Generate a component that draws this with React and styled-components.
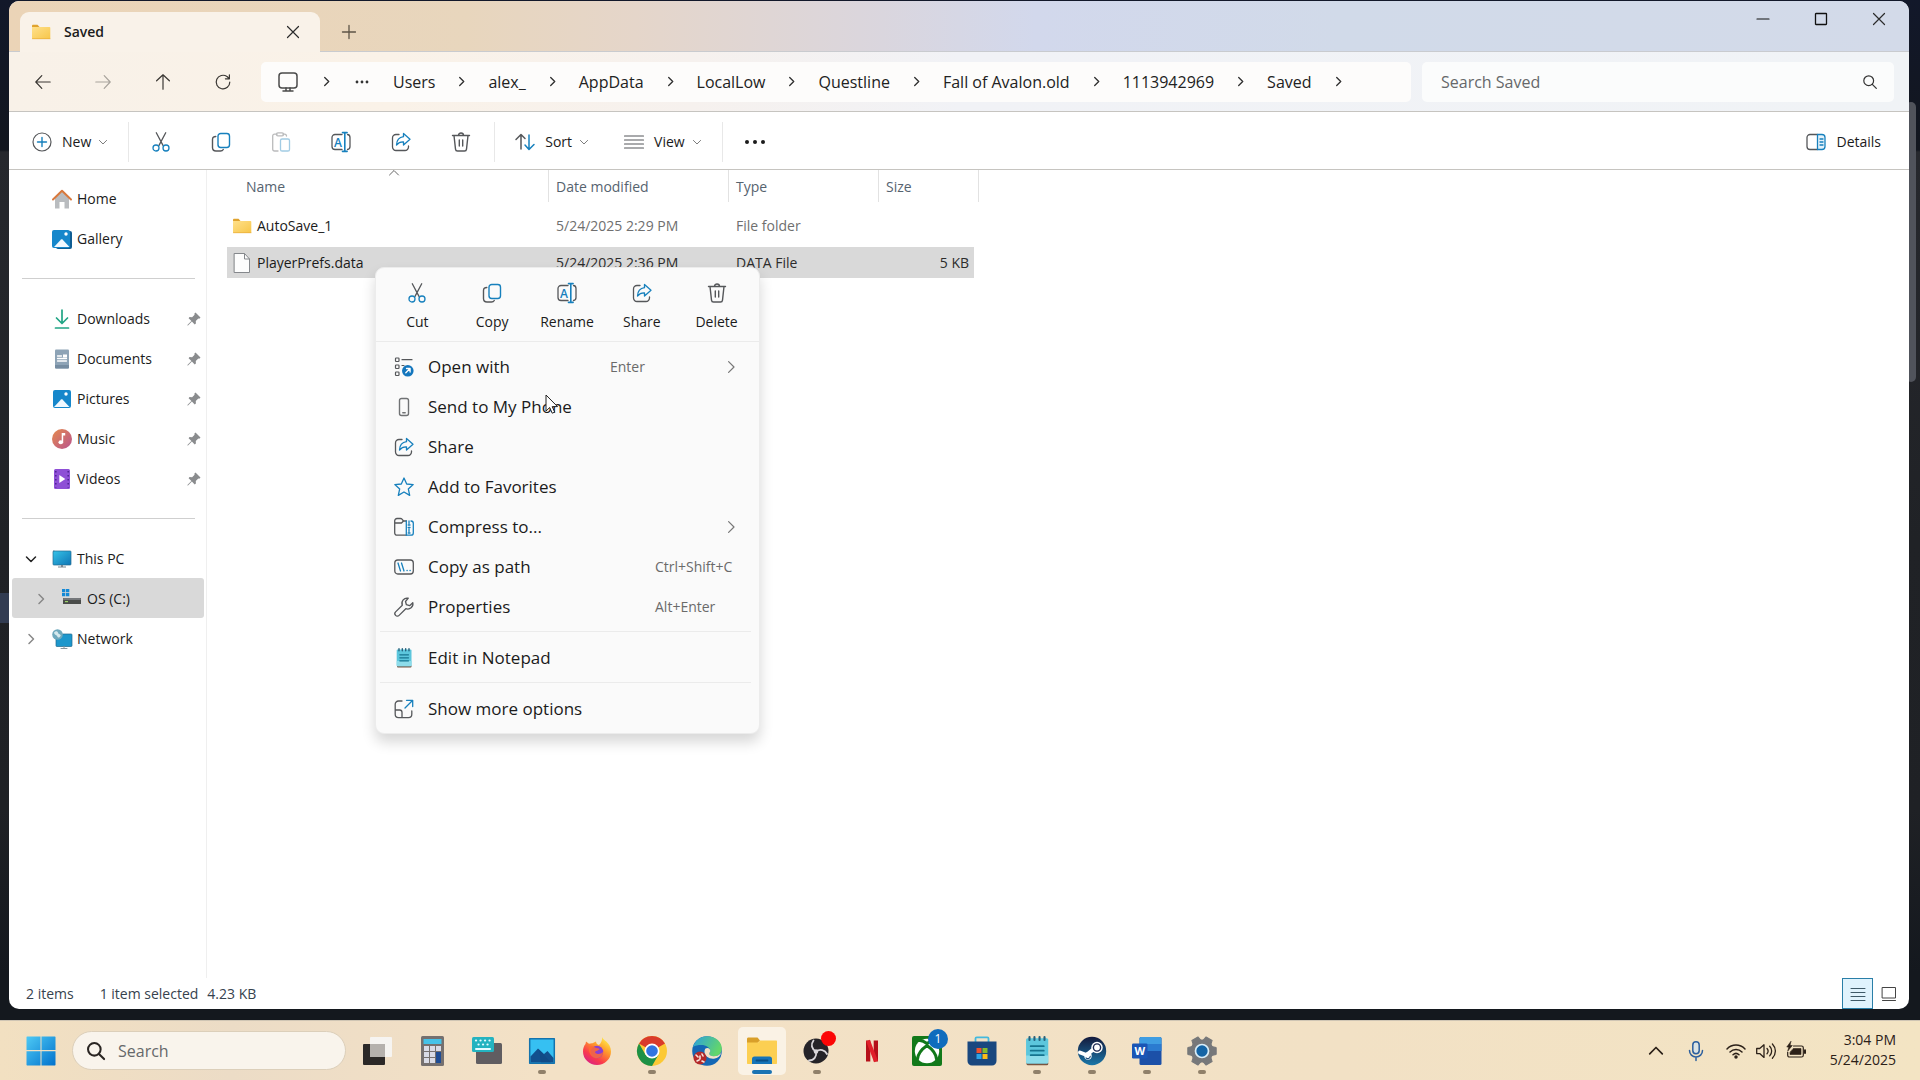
import { useState } from "react";
import styled, { createGlobalStyle } from "styled-components";

const GlobalStyle = createGlobalStyle`
  * {
    box-sizing: border-box;
  }
  body {
    margin: 0;
    font-family: "Open Sans", "Noto Sans", sans-serif;
    font-size: 14px;
    line-height: 20px;
    color: #1b1b1b;
    overflow: hidden;
  }
  button {
    font: inherit;
    color: inherit;
    background: none;
    border: none;
    padding: 0;
    cursor: default;
  }
  a {
    color: inherit;
    text-decoration: none;
    cursor: default;
  }
  svg {
    display: block;
    flex: none;
    overflow: visible;
  }
`;

const Desktop = styled.div`
  position: relative;
  display: flex;
  flex-direction: column;
  height: 100vh;
  background: linear-gradient(#12182a 0, #12161e 150px, #26282d 152px, #202226 50%, #1f2125 75%, #14181e 90%);
`;

const BehindScroll = styled.div`
  position: absolute;
  right: 4px;
  top: 102px;
  width: 10px;
  height: 280px;
  border-radius: 5px;
  background: #50535b;
`;

const BehindRow = styled.div`
  position: absolute;
  left: 0;
  top: 593px;
  width: 20px;
  height: 30px;
  background: #323c52;
`;

const Window = styled.main`
  position: relative;
  flex: 1;
  min-height: 0;
  display: flex;
  flex-direction: column;
  margin: 1px 11px 11px 9px;
  border-radius: 10px;
  background: #fff;
  overflow: hidden;
`;

const TitleBar = styled.header`
  display: flex;
  height: 51px;
  padding: 11px 0 0 11px;
  border-bottom: 1px solid #c9cbcf;
  background: linear-gradient(
    90deg,
    #ebd4b7 0%,
    #e8d6bd 24%,
    #e5d6ca 33%,
    #dad6de 46%,
    #d2d8ec 54%,
    #d1dae9 70%,
    #d3dae9 100%
  );
`;

const Tab = styled.div`
  display: flex;
  align-items: center;
  width: 300px;
  height: 40px;
  padding: 0 9px 0 11px;
  gap: 13px;
  border-radius: 9px 9px 0 0;
  background: #f9f2e9;
  font-weight: 600;
  font-size: 14px;
`;

const TabTitle = styled.span`
  flex: 1;
`;

const SmallButton = styled.button`
  display: grid;
  place-items: center;
  width: 36px;
  height: 32px;
`;

const NewTab = styled(SmallButton)`
  width: 58px;
  height: 40px;
`;

const WindowControls = styled.div`
  display: flex;
  margin: -11px 1px 0 auto;
`;

const ControlButton = styled.button`
  display: grid;
  place-items: center;
  width: 58px;
  height: 36px;
`;

const NavBar = styled.div`
  display: flex;
  align-items: center;
  height: 60px;
  padding: 0 15px 0 4px;
  border-bottom: 1px solid #c6c4c0;
  background: linear-gradient(90deg, #f8f1e8 0%, #faf2e8 20%, #f6f1ee 36%, #f1f2f6 50%, #f0f3f6 100%);
`;

const NavButton = styled.button`
  display: grid;
  place-items: center;
  width: 60px;
  height: 40px;
  color: ${(p) => (p.disabled ? "#a8a39c" : "#3a3733")};
`;

const Address = styled.div`
  flex: 1;
  display: flex;
  align-items: center;
  gap: 22px;
  height: 40px;
  margin-left: 8px;
  padding-left: 15px;
  border-radius: 5px;
  background: #fdfcfb;
  font-size: 16px;
  white-space: nowrap;
  color: #222;
`;

const SearchBox = styled.label`
  flex: 0 1 472px;
  display: flex;
  align-items: center;
  height: 40px;
  margin-left: 11px;
  padding: 0 17px 0 19px;
  border-radius: 5px;
  background: #fbfcfc;
`;

const SearchInput = styled.input`
  flex: 1;
  min-width: 0;
  border: none;
  outline: none;
  padding: 0;
  background: transparent;
  font: inherit;
  font-size: 16px;
  color: #222;
  &::placeholder {
    color: #66686a;
    opacity: 1;
  }
`;

const Toolbar = styled.div`
  display: flex;
  align-items: center;
  height: 58px;
  padding: 2px 2px 0 5px;
  border-bottom: 1px solid #c6c4c0;
`;

const ToolButton = styled.button`
  display: flex;
  align-items: center;
  height: 40px;
  padding: 0 18px;
  margin-left: ${(p) => (p.$last ? "auto" : "0")};
`;

const ToolLabel = styled.span`
  margin: 0 8px 0 10px;
`;

const IconButton = styled.button`
  display: grid;
  place-items: center;
  width: 60px;
  height: 40px;
  opacity: ${(p) => (p.disabled ? 0.4 : 1)};
`;

const Separator = styled.span`
  width: 1px;
  height: 40px;
  margin: 0 2px 0 3px;
  background: #e8e8e8;
`;

const Body = styled.div`
  flex: 1;
  min-height: 0;
  display: flex;
`;

const Sidebar = styled.nav`
  width: 198px;
  padding: 8px 2px 0 3px;
  border-right: 1px solid #efefef;
`;

const SideItem = styled.a`
  display: flex;
  align-items: center;
  height: 40px;
  padding: 1px 3px 0 ${(p) => (p.$nested ? 23 : 13)}px;
  border-radius: 3px;
  background: ${(p) => (p.$selected ? "#d9d9d9" : "transparent")};
`;

const ChevronSlot = styled.span`
  display: grid;
  place-items: center;
  width: 12px;
  margin-right: 15px;
`;

const SideLabel = styled.span`
  flex: 1;
  margin-left: 5px;
`;

const SideRule = styled.hr`
  height: 1px;
  margin: 20px 9px 19px 10px;
  border: none;
  background: #cfcfcf;
`;

const FilePane = styled.section`
  flex: 1;
  padding-left: 20px;
`;

const FileTable = styled.table`
  width: 752px;
  table-layout: fixed;
  border-collapse: separate;
  border-spacing: 0;
`;

const HeadCell = styled.th`
  position: relative;
  width: ${(p) => p.$w}px;
  height: 37px;
  padding: 0;
  vertical-align: top;
  text-align: left;
  font-weight: 400;
  color: #56636f;
`;

const HeadLabel = styled.div`
  height: 32px;
  padding: 7px 0 0 ${(p) => (p.$first ? 19 : 7)}px;
  border-right: 1px solid #e2e2e2;
`;

const SortMark = styled.span`
  position: absolute;
  top: -2px;
  left: 162px;
`;

const Row = styled.tr`
  color: ${(p) => (p.$selected ? "#2c2c2c" : "#6f6f6f")};
  --row: ${(p) => (p.$selected ? "#d9d9d9" : "transparent")};
`;

const Cell = styled.td`
  height: 37px;
  padding: 1px 0 0 ${(p) => (p.$name ? 5 : 7)}px;
  border: solid transparent;
  border-width: 3px 0;
  background: var(--row);
  background-clip: padding-box;
`;

const SizeCell = styled(Cell)`
  padding: 1px 5px 0 0;
  border-right-width: 5px;
  text-align: right;
`;

const FileName = styled.span`
  display: flex;
  align-items: center;
  gap: 5px;
  color: #1b1b1b;
`;

const StatusBar = styled.footer`
  display: flex;
  align-items: flex-start;
  height: 31px;
  padding: 0 5px 0 17px;
  color: #36424e;
  line-height: 32px;
`;

const StatusText = styled.span`
  margin-right: ${(p) => p.$gap}px;
`;

const ViewButtons = styled.div`
  display: flex;
  margin-left: auto;
`;

const ViewButton = styled.button`
  display: grid;
  place-items: center;
  width: 31px;
  height: 31px;
  border: 1px solid ${(p) => (p.$on ? "#2a7fa8" : "transparent")};
  background: ${(p) => (p.$on ? "#e0f3fd" : "transparent")};
`;

const Menu = styled.div`
  position: absolute;
  left: 366px;
  top: 266px;
  width: 385px;
  border: 1px solid #ececec;
  border-radius: 9px;
  background: #fafafa;
  box-shadow: 0 8px 14px rgba(0, 0, 0, 0.16);
`;

const MenuTop = styled.div`
  display: flex;
  height: 74px;
  padding: 0 5px 0 4px;
  border-bottom: 1px solid #ebebeb;
`;

const TopAction = styled.button`
  flex: 1;
  display: flex;
  flex-direction: column;
  align-items: center;
  gap: 9px;
  padding-top: 15px;
`;

const MenuGroup = styled.div`
  padding: 5px 0 4px;
  & + & {
    margin: 0 8px 0 4px;
    border-top: 1px solid #ebebeb;
    padding: 6px 0 4px;
  }
`;

const MenuItem = styled.button`
  display: grid;
  grid-template-columns: 20px 196px 45px 1fr 10px;
  align-items: center;
  width: 100%;
  height: 40px;
  padding: 0 24px 0 ${(p) => (p.$sub ? 14 : 18)}px;
  text-align: left;
`;

const MenuLabel = styled.span`
  padding-left: 14px;
  font-size: 17px;
  line-height: 24px;
  white-space: nowrap;
`;

const Shortcut = styled.span`
  grid-column: ${(p) => (p.$wide ? 4 : 3)};
  color: #6a6a6a;
  white-space: nowrap;
`;

const MenuArrow = styled.span`
  grid-column: 5;
`;

const Cursor = styled.svg`
  position: absolute;
  left: 536px;
  top: 393px;
  pointer-events: none;
`;

const Taskbar = styled.footer`
  display: flex;
  align-items: center;
  height: 60px;
  padding: 0 24px 0 17px;
  gap: 7px;
  background: linear-gradient(90deg, #f2e0c1, #ecdcc6 12%, #f3e1c6 28%, #f2e1c5 70%, #f3e4c3);
  border-top: 1px solid #cfc5b4;
`;

const TaskButton = styled.button`
  position: relative;
  display: grid;
  place-items: center;
  width: 48px;
  height: 48px;
  border-radius: 5px;
  background: ${(p) => (p.$active ? "#faf2e5" : "transparent")};
  &::after {
    content: "";
    display: ${(p) => (p.$open || p.$active ? "block" : "none")};
    position: absolute;
    bottom: 1px;
    left: 50%;
    width: ${(p) => (p.$active ? 20 : 8)}px;
    height: 4px;
    margin-left: ${(p) => (p.$active ? -10 : -4)}px;
    border-radius: 2px;
    background: ${(p) => (p.$active ? "#1a73b3" : "#90806a")};
  }
`;

const TaskSearch = styled.label`
  display: flex;
  align-items: center;
  flex: 0 1 274px;
  height: 39px;
  padding: 0 16px 0 14px;
  gap: 13px;
  border: 1px solid #dccfba;
  border-radius: 20px;
  background: #f9f4ec;
`;

const Badge = styled.span`
  position: absolute;
  top: ${(p) => (p.$plain ? 4 : 2)}px;
  left: ${(p) => (p.$plain ? 28 : 25)}px;
  width: ${(p) => (p.$plain ? 15 : 20)}px;
  height: ${(p) => (p.$plain ? 15 : 20)}px;
  border-radius: 50%;
  background: ${(p) => (p.$plain ? "#fb0505" : "#0f6cbd")};
  color: #fff;
  font-size: 12px;
`;

const Tray = styled.div`
  display: flex;
  align-items: center;
  margin-left: auto;
`;

const TrayButton = styled.button`
  display: flex;
  align-items: center;
  justify-content: center;
  gap: 10px;
  min-width: 40px;
  height: 48px;
  padding: 0 10px;
`;

const Clock = styled.button`
  padding: 0 0 2px 14px;
  text-align: right;
  color: #2b2018;
`;

const BLUE = "#1780bd";
const GREY = "#55575a";

const Svg = ({ size = 20, w, h, box = "0 0 20 20", children, ...rest }) => (
  <svg
    width={w || size}
    height={h || size}
    viewBox={box}
    fill="none"
    strokeLinecap="round"
    strokeLinejoin="round"
    aria-hidden="true"
    {...rest}
  >
    {children}
  </svg>
);

const Chevron = ({ dir = "right", size = 8, color = "#444", weight = 1.5 }) => {
  const turn = { right: 0, down: 90, left: 180, up: 270 }[dir];
  return (
    <Svg size={size} box="0 0 10 10" stroke={color} strokeWidth={weight}>
      <path d="M3 0.5 7.5 5 3 9.5" transform={`rotate(${turn} 5 5)`} />
    </Svg>
  );
};

const Cross = ({ size = 12 }) => (
  <Svg size={size} box="0 0 12 12" stroke="#2b2b2b" strokeWidth="1.2">
    <path d="M.5.5l11 11M11.5.5l-11 11" />
  </Svg>
);

const CutIcon = () => (
  <Svg strokeWidth="1.3">
    <path d="M5.3.8 12 13.4M14.7.8 8 13.4" stroke={GREY} />
    <circle cx="5" cy="16" r="3" stroke={BLUE} />
    <circle cx="15" cy="16" r="3" stroke={BLUE} />
  </Svg>
);

const CopyIcon = () => (
  <Svg strokeWidth="1.4">
    <path d="M4.8 4.5C2.5 4.5 1.5 5.5 1.5 7.5v8c0 2.2 1.3 3.5 3.5 3.5h4.5c1.3 0 2.2-.5 2.8-1.5" stroke={GREY} />
    <rect x="7" y="1.5" width="11.5" height="14" rx="2.7" stroke={BLUE} />
  </Svg>
);

const PasteIcon = () => (
  <Svg strokeWidth="1.3">
    <path d="M7 19H3.5A1.8 1.8 0 0 1 1.7 17.2V4a1.8 1.8 0 0 1 1.8-1.8H6M12 2.2h1.7A1.8 1.8 0 0 1 15.5 4" stroke={GREY} />
    <rect x="5.5" y=".8" width="7" height="3" rx="1.4" stroke={GREY} />
    <rect x="9.5" y="7" width="9" height="12" rx="1.6" stroke={BLUE} />
  </Svg>
);

const RenameIcon = () => (
  <Svg strokeWidth="1.3">
    <path d="M11 2.5H4A3 3 0 0 0 1 5.5v9a3 3 0 0 0 3 3h7M16.5 2.5c1.7.2 2.5 1.3 2.5 3v9c0 1.7-.8 2.8-2.5 3" stroke={GREY} />
    <path d="M13.8 1v18M11.5.6h4.6M11.5 19.4h4.6" stroke={BLUE} strokeWidth="1.6" />
    <text x="3" y="14.5" fontSize="12" fontFamily="Open Sans, sans-serif" fontWeight="600" fill={BLUE}>
      A
    </text>
  </Svg>
);

const ShareIcon = () => (
  <Svg strokeWidth="1.3">
    <path d="M8 2.5H5A3.5 3.5 0 0 0 1.5 6v9A3.5 3.5 0 0 0 5 18.5h9a3.5 3.5 0 0 0 3.5-3.5v-1" stroke={GREY} />
    <path d="M12.5 1.5 19 7.3l-6.5 5.700V9.8C9.5 9.6 7.2 10.8 5.5 13c.2-4.500 2.8-7.800 7-8.300z" stroke={BLUE} />
  </Svg>
);

const TrashIcon = () => (
  <Svg stroke={GREY} strokeWidth="1.4">
    <path d="M1.5 3.500h17M3 3.500l1.500 13.600c.1 1.100.9 1.900 2 1.900h7c1.100 0 1.900-.8 2-1.900L17 3.500M7.500 3.300c0-3 5-3 5 0M8.300 8v6M11.700 8v6" />
  </Svg>
);

const DetailsIcon = () => (
  <Svg strokeWidth="1.3">
    <path d="M11.500 2.500H4A3 3 0 0 0 1 5.500v9a3 3 0 0 0 3 3h7.500" stroke={GREY} />
    <path d="M11.500 2.500H16a3 3 0 0 1 3 3v9a3 3 0 0 1-3 3h-4.500z" stroke={BLUE} fill="#e3f2fb" />
    <path d="M14 7h3M14 10h3M14 13h3" stroke={BLUE} />
  </Svg>
);

const FolderIcon = ({ size = 20 }) => (
  <Svg size={size}>
    <defs>
      <linearGradient id="folder" x1="0" y1="0" x2="1" y2="1">
        <stop stopColor="#ffe08a" />
        <stop offset="1" stopColor="#f7c649" />
      </linearGradient>
    </defs>
    <path d="M1 4.200c0-.9.500-1.400 1.300-1.400h4.200L8.500 5H1z" fill="#e0a32e" />
    <path d="M1 5h17.500c.5 0 .8.300.8.800v10.400c0 .5-.3.800-.8.800H1.800c-.5 0-.8-.3-.8-.8z" fill="url(#folder)" />
    <path d="M1.500 16.700h17.500" stroke="#eab03c" strokeWidth=".8" />
  </Svg>
);

const PictureIcon = ({ stacked }) => (
  <Svg>
    {stacked && <rect x="4" y="2" width="16" height="18" rx="2" fill="#0f5d93" />}
    <rect x={stacked ? 0 : 1} y="1" width="18" height="18" rx="2" fill="#1687cb" />
    <path d="M2 18 9 10.500c.5-.5 1-.5 1.500 0L17.500 18z" fill="#f1f9ff" />
    <circle cx="14" cy="5" r="1.700" fill="#fff" />
  </Svg>
);

const HomeIcon = () => (
  <Svg>
    <path d="M3 8.500 10 2l7 6.500v11h-4.500v-6.500h-5v6.500H3z" fill="#b9bcbf" />
    <path d="M1 10.500 10 1.800l9 8.700" stroke="#d8793d" strokeWidth="2" />
  </Svg>
);

const DownloadIcon = () => (
  <Svg stroke="#21a585" strokeWidth="1.7">
    <path d="M10 1v13M4.500 9 10 14.500 15.500 9M3.500 19h13" />
  </Svg>
);

const DocumentIcon = () => (
  <Svg>
    <rect x="3" y="0.500" width="14" height="19" rx="1" fill="#8da3b6" />
    <path d="M3 16h14v2.500a1 1 0 0 1-1 1H4a1 1 0 0 1-1-1z" fill="#758ca1" />
    <path d="M5.500 7h4M5.500 9.500h9M5.500 12h9" stroke="#fff" strokeWidth="1.3" />
    <rect x="11" y="5.500" width="4" height="3" fill="#fff" />
  </Svg>
);

const MusicIcon = () => (
  <Svg>
    <defs>
      <linearGradient id="music" x1="0" y1="0" x2="1" y2="1">
        <stop stopColor="#e58a4d" />
        <stop offset="1" stopColor="#b9548f" />
      </linearGradient>
    </defs>
    <circle cx="10" cy="10" r="10" fill="url(#music)" />
    <ellipse cx="8.800" cy="13.200" rx="2.300" ry="2" fill="#fff" />
    <path d="M9.700 4h3.500v2.600h-2v6.600H9.700z" fill="#fff" />
  </Svg>
);

const VideoIcon = () => (
  <Svg>
    <rect x="2" y="0" width="16" height="20" rx="1.500" fill="#8e4fd6" />
    <path d="M3.800 2v16.500M16.200 2v16.500" stroke="#4b2291" strokeWidth="1.5" strokeDasharray="1.5 2.5" strokeLinecap="butt" />
    <path d="M7.300 6v8l6-4z" fill="#fff" />
  </Svg>
);

const PcIcon = () => (
  <Svg>
    <defs>
      <linearGradient id="pc" x1="0" y1="0" x2="1" y2="1">
        <stop stopColor="#35c3e8" />
        <stop offset="1" stopColor="#0f75b5" />
      </linearGradient>
    </defs>
    <rect x="1" y="2" width="18" height="14" rx=".8" fill="url(#pc)" stroke="#236b8f" strokeWidth=".7" />
    <path d="M9 16h2v1.500h3V18.500H6V17.500h3z" fill="#7b8790" />
  </Svg>
);

const DriveIcon = () => (
  <Svg>
    <path d="M0 0h3.300v3.300H0zM4 0h3.300v3.300H4zM0 4h3.300v3.300H0zM4 4h3.300v3.300H4z" fill="#1489d6" />
    <rect x="1" y="9" width="18" height="6" rx=".6" fill="#4a4c4a" />
    <path d="M1.500 9h17l.5 2H1z" fill="#74777a" />
    <rect x="3" y="12" width="3" height="1.200" fill="#9cd36a" />
  </Svg>
);

const NetworkIcon = () => (
  <Svg>
    <rect x="4" y="5" width="16" height="12.500" rx=".8" fill="#1d97cc" stroke="#20698c" strokeWidth=".7" />
    <path d="M12 17.500v1.500M9 19.500h6" stroke="#8a959c" strokeWidth="1" />
    <circle cx="5.500" cy="5.500" r="5.300" fill="#6fa9bd" />
    <path d="M2 3.500c2-2 3.500-1.500 4 .2s2.500 1 2.700 3c-1.700 2.700-3 2-3.700.3S2.500 6.300 2 3.500z" fill="#d5e8ec" />
  </Svg>
);

const PinIcon = () => (
  <Svg size={14} box="0 0 14 14">
    <path d="M8.500.5 13.500 5.500 12.300 6.700 11.300 6.400 8.800 8.900 8.900 11.600 7.700 12.400 4.900 9.500 1 13.500.4 13.400.6 12.800 4.400 9 1.600 6.300 2.500 5.100 5.100 5.200 7.600 2.700 7.300 1.700z" fill="#8a8c8e" />
  </Svg>
);

const FileIcon = () => (
  <Svg>
    <path d="M2.500.5h10L17.500 6v13.500h-15z" fill="#fdfdfd" stroke="#85888c" strokeWidth="1" />
    <path d="M12.500.8V6h5" stroke="#85888c" strokeWidth="1" />
  </Svg>
);

const OpenWithIcon = () => (
  <Svg>
    <g stroke={GREY} strokeWidth="1.2">
      <rect x="1.500" y="1" width="3.500" height="3.500" rx=".7" />
      <rect x="1.500" y="8" width="3.500" height="3.500" rx=".7" />
      <rect x="1.500" y="15" width="3.500" height="3.500" rx=".7" />
      <path d="M8 2.700h10M8 8.500h2" />
    </g>
    <circle cx="13.800" cy="13.800" r="5.800" fill="#1376bd" />
    <path d="M11.800 15.800l4-4M12.500 11.500h3.600v3.600" stroke="#fff" strokeWidth="1.3" />
  </Svg>
);

const PhoneIcon = () => (
  <Svg stroke="#707274" strokeWidth="1.4">
    <rect x="5.500" y="1.500" width="9" height="17" rx="2" />
    <path d="M8.800 15.800h2.400" />
  </Svg>
);

const StarIcon = () => (
  <Svg stroke={BLUE} strokeWidth="1.3">
    <path d="M10 1l2.700 6 6.500.6-4.900 4.300 1.400 6.500L10 15l-5.700 3.400 1.400-6.500L.8 7.600 7.300 7z" />
  </Svg>
);

const ZipIcon = () => (
  <Svg strokeWidth="1.3">
    <path d="M12.500 4H9.500L8 2.200C7.600 1.700 7.200 1.500 6.500 1.500H3a2.300 2.300 0 0 0-2.300 2.300v12A2.300 2.300 0 0 0 3 18.200h9.300M1 6h6.500l2-2" stroke={GREY} />
    <path d="M12.300 4v14.200H17a2.300 2.300 0 0 0 2.300-2.300V6.300A2.300 2.300 0 0 0 17 4M15 4v2.500M14.200 8h1.800M14.200 10.500h1.800M15 12v2.500M14.200 16h1.800" stroke={BLUE} />
  </Svg>
);

const PathIcon = () => (
  <Svg strokeWidth="1.3">
    <rect x=".8" y="3" width="18.500" height="14" rx="3" stroke={GREY} />
    <path d="M4 6l2.500 8M7.500 6 10 14M13 13.500h.2M16 13.500h.2" stroke={BLUE} />
  </Svg>
);

const WrenchIcon = () => (
  <Svg stroke={GREY} strokeWidth="1.3">
    <path d="M14.300 1.200a5.200 5.200 0 0 0-6 7L1.600 14.900a2.400 2.400 0 0 0 3.500 3.500l6.700-6.700a5.200 5.200 0 0 0 7-6l-3.200 3-3.200-1-.9-3.200z" />
  </Svg>
);

const NotepadIcon = ({ size = 20 }) => (
  <Svg size={size}>
    <rect x="3" y="17" width="14.500" height="2.500" rx="1" fill="#7a5540" />
    <rect x="2.700" y="1.500" width="14.800" height="16.800" rx="1" fill="#5cc6dc" />
    <path d="M2.700 13h14.800v4.300a1 1 0 0 1-1 1H3.700a1 1 0 0 1-1-1z" fill="#8ddcea" />
    <path d="M5 .7v2M8.300.7v2M11.700.7v2M15 .7v2" stroke="#26617c" strokeWidth="1.4" />
    <path d="M5.800 6.800h8.700M5.800 9.800h8.700M5.800 12.800h8.700" stroke="#16748f" strokeWidth="1.2" />
  </Svg>
);

const MoreIcon = () => (
  <Svg strokeWidth="1.3">
    <path d="M8 2H4.500A3.300 3.300 0 0 0 1.200 5.300v10A3.300 3.300 0 0 0 4.500 18.600h10a3.300 3.300 0 0 0 3.300-3.300V12M1.500 11h4.200A2.300 2.300 0 0 1 8 13.300v5" stroke={GREY} />
    <path d="M11 9l7.500-7.500M12.500 1.300h6.200v6.200" stroke={BLUE} />
  </Svg>
);

const SearchGlyph = ({ size = 14, weight = 1.2, color = "#333" }) => (
  <Svg size={size} box="0 0 14 14" stroke={color} strokeWidth={weight}>
    <circle cx="5.700" cy="5.700" r="4.900" />
    <path d="M9.300 9.300 13.300 13.300" />
  </Svg>
);

const StartIcon = () => (
  <Svg size={30} box="0 0 30 30">
    <defs>
      <linearGradient id="start" x1="0" y1="0" x2="30" y2="30" gradientUnits="userSpaceOnUse">
        <stop stopColor="#4fcbf5" />
        <stop offset="1" stopColor="#0070cc" />
      </linearGradient>
    </defs>
    <path d="M1 .5h13.500v13.500H.5V1zM15.500.5H29l.5.5v13H15.500zM.5 15.200h14v14.300H1l-.5-.5zM15.500 15.200h14V29l-.5.5H15.500z" fill="url(#start)" />
  </Svg>
);

const TaskViewIcon = () => (
  <Svg size={30} box="0 0 30 30">
    <rect x="1" y="8" width="22" height="21" rx="1" fill="#2b2827" />
    <rect x="8" y="1" width="22" height="20" rx="1" fill="#f6f5f4" opacity=".93" />
    <path d="M8 8h15v13H8z" fill="#b5b1ad" />
  </Svg>
);

const CalcIcon = () => (
  <Svg size={30} box="0 0 30 30">
    <rect x="4" y="0" width="23" height="30" rx="1.500" fill="#75706f" />
    <rect x="6.500" y="3" width="18" height="5" fill="#45c2e8" />
    <path d="M7 10h5v5H7zM13 10h5v5h-5zM19 10h5v5h-5zM7 16h5v5H7zM13 16h5v5h-5zM7 22h5v5H7zM13 22h5v5h-5z" fill="#d9dbe6" />
    <path d="M19 16h5v11h-5z" fill="#1f4c94" />
  </Svg>
);

const KeyboardIcon = () => (
  <Svg size={30} box="0 0 30 30">
    <rect x="4" y="7" width="26" height="21" rx="1.500" fill="#605d61" />
    <rect x="0" y="1" width="22" height="15" rx="1.500" fill="#24b3c0" />
    <path d="M4 4.500h.1M8.500 4.500h.1M13 4.500h.1M17.500 4.500h.1M6.500 8.500h.1M11 8.500h.1M15.500 8.500h.1" stroke="#e5fbff" strokeWidth="2.2" />
    <path d="M4 13h14" stroke="#e5fbff" strokeWidth="2" />
  </Svg>
);

const PhotosIcon = () => (
  <Svg size={30} box="0 0 30 30">
    <rect x="2.700" y="2.700" width="24.600" height="24.600" fill="#36c0f2" stroke="#1473ad" strokeWidth="1.5" />
    <path d="M3.500 20.500 11 12.500l6 5.500 3.500-3 6 7v4.500h-23z" fill="#12508e" />
    <path d="M12 13.500 24 26.500H14z" fill="#0f4580" opacity=".5" />
  </Svg>
);

const FirefoxIcon = () => (
  <Svg size={30} box="0 0 30 30">
    <defs>
      <linearGradient id="fox" x1=".85" y1=".05" x2=".2" y2="1">
        <stop stopColor="#fff04a" />
        <stop offset=".35" stopColor="#ff9a2b" />
        <stop offset=".7" stopColor="#fa3a4b" />
        <stop offset="1" stopColor="#d51f8c" />
      </linearGradient>
    </defs>
    <path d="M20 1c1 3 5 4 7.500 8.500 1 2 1.500 4 1.500 6a14 13.500 0 0 1-28 0c0-3 .8-5.500 2.500-7.500L4 5.500l3 2.300C8 7.200 10 7 10.500 7.200L14 5.500c0 1.500 1 3 3 3.500 2-2 3.500-4.500 3-8z" fill="url(#fox)" />
    <circle cx="15" cy="16" r="6.200" fill="#8a3fd0" />
    <path d="M7 11c3-1.500 5-.5 6 .5 2 1 4 .3 4.500 1.500-1 2-4 1.300-4.500 3.500 2.500 2.500 6 1.500 8-.5 0 4-4 7-8 6S6 16 7 11z" fill="#ff6a33" opacity=".85" />
  </Svg>
);

const ChromeIcon = () => (
  <Svg size={30} box="0 0 30 30">
    <circle cx="15" cy="15" r="15" fill="#fcc934" />
    <path d="M15 15 2 7.500A15 15 0 0 1 28 7.500z" fill="#d93a2b" />
    <path d="M2 7.500A15 15 0 0 0 15 30L21.500 18.700 15 22 8.500 18.700z" fill="#1e9146" />
    <circle cx="15" cy="15" r="7.500" fill="#fff" />
    <circle cx="15" cy="15" r="5.800" fill="#3174e0" />
  </Svg>
);

const EdgeIcon = () => (
  <Svg size={30} box="0 0 30 30">
    <defs>
      <linearGradient id="edge" x1="0" y1="0" x2="1" y2=".4">
        <stop stopColor="#2a9fe0" />
        <stop offset="1" stopColor="#63d66b" />
      </linearGradient>
    </defs>
    <circle cx="15" cy="15" r="14.800" fill="#1467b5" />
    <path d="M1 11C3 4 9 .2 15 .2c9 0 15 6 14.800 12.500 0 5-4 7.500-8 7.500-3 0-4.500-1.200-4.500-2.500 0-1 1-1.500 1-3C18 11.500 14 9 9.500 9 6 9 3 9.500 1 11z" fill="url(#edge)" />
    <path d="M13.500 12.500c2.500-1.500 5 .5 4.800 2.500 0 1.200-1 1.500-1 2.700 0 1.500 1.700 2.500 4.500 2.500 3 0 5.500-1 7.500-3.500-1 3-3.300 5.500-7.300 6-5 .5-9.500-2.700-9.500-6.700 0-1.500.3-2.700 1-3.500z" fill="#f3e1c6" />
    <circle cx="8" cy="22" r="6.500" fill="#b32a2a" />
    <path d="M4 19l2 2M10 18l1 2M5 25l2-1M10 25l2 1M8 20v3" stroke="#f6e5df" strokeWidth="1.6" />
  </Svg>
);

const ExplorerIcon = () => (
  <Svg size={30} box="0 0 30 30">
    <path d="M0 3c0-1 .5-1.500 1.500-1.500h9L13 4.500 10.500 7H0z" fill="#d99f29" />
    <path d="M0 6.500h11l2-2h16c.7 0 1 .4 1 1V27c0 .7-.3 1-1 1H1c-.7 0-1-.3-1-1z" fill="#fccf52" />
    <path d="M5 28v-5a2.500 2.500 0 0 1 2.500-2.500h15A2.500 2.500 0 0 1 25 23v5z" fill="#1674b8" />
    <path d="M9.500 24.500h11" stroke="#0b4f86" strokeWidth="1.8" />
  </Svg>
);

const ObsIcon = () => (
  <Svg size={30} box="0 0 30 30">
    <circle cx="14" cy="15" r="12.500" fill="#252328" />
    <g stroke="#d9d6da" strokeWidth="1.8">
      <path d="M14 15.500C9.500 13 8.500 8.500 11.500 4.500" />
      <path d="M14 15.500c4-3 9-1.500 11 2.500" />
      <path d="M14 15.500c1 5-2 9-7 9" />
    </g>
    <circle cx="14" cy="15.500" r="2.300" fill="#d9d6da" />
  </Svg>
);

const NetflixIcon = () => (
  <Svg size={30} box="0 0 30 30">
    <rect x="9" y="4.500" width="4.300" height="21" fill="#b5101a" />
    <rect x="16.700" y="4.500" width="4.300" height="21" fill="#b5101a" />
    <line x1="11" y1="4.500" x2="19" y2="25.500" stroke="#e0202a" strokeWidth="4" strokeLinecap="butt" />
  </Svg>
);

const XboxIcon = () => (
  <Svg size={30} box="0 0 30 30">
    <rect width="30" height="30" rx="2" fill="#12791a" />
    <circle cx="15" cy="15" r="12.200" fill="#fff" />
    <path d="M7 4.500c3-.5 6 1.500 8 3 2-1.500 5-3.500 8-3M15 9.500C10 13 6 18 5.500 23M15 9.500c5 3.500 9 8.500 9.500 13.500" stroke="#12791a" strokeWidth="3" />
  </Svg>
);

const StoreIcon = () => (
  <Svg size={30} box="0 0 30 30">
    <path d="M8.500 6V2.500c0-.8.400-1.200 1.200-1.200h10.600c.8 0 1.200.4 1.200 1.200V6" stroke="#43b9de" strokeWidth="1.8" />
    <path d="M.5 5.500h29V25a4.500 4.500 0 0 1-4.500 4.500H5A4.500 4.500 0 0 1 .5 25z" fill="#19477f" />
    <path d="M9.500 12h5v5h-5z" fill="#f0512d" />
    <path d="M15.500 12h5v5h-5z" fill="#84bb2c" />
    <path d="M9.500 18h5v5h-5z" fill="#2ba4e6" />
    <path d="M15.500 18h5v5h-5z" fill="#fbbb17" />
  </Svg>
);

const SteamIcon = () => (
  <Svg size={30} box="0 0 30 30">
    <defs>
      <linearGradient id="steam" x1="0" y1="0" x2="0" y2="1">
        <stop stopColor="#141a3c" />
        <stop offset="1" stopColor="#1a76a8" />
      </linearGradient>
    </defs>
    <circle cx="15" cy="15" r="14.200" fill="url(#steam)" />
    <path d="M3 16.500 9.500 19l5.500-4.500L19 12" stroke="#fff" strokeWidth="4" />
    <circle cx="20" cy="11.500" r="5.700" fill="#fff" />
    <circle cx="20" cy="11.500" r="3.600" fill="#fff" stroke="#1b2850" strokeWidth="1.4" />
    <circle cx="11" cy="20" r="3.700" fill="#fff" />
    <path d="M9 21.800a2.500 2.500 0 0 0 4.300-1.500" stroke="#1b4a78" strokeWidth="1.1" />
  </Svg>
);

const WordIcon = () => (
  <Svg size={30} box="0 0 30 30">
    <rect x="7.500" y="1" width="22" height="28" rx="1.500" fill="#1c50a8" />
    <path d="M9 1h19a1.500 1.500 0 0 1 1.500 1.500V8h-22V2.500A1.500 1.500 0 0 1 9 1z" fill="#3f9de2" />
    <path d="M7.500 8h22v7h-22z" fill="#2b7bd0" />
    <rect x="0" y="7.500" width="15.500" height="15" rx="1.300" fill="#1a55b5" />
    <text x="7.800" y="19" textAnchor="middle" fontSize="11" fontWeight="700" fontFamily="Open Sans, sans-serif" fill="#fff">
      W
    </text>
  </Svg>
);

const SettingsIcon = () => (
  <Svg size={30} box="0 0 30 30">
    <g fill="#77787a">
      <circle cx="15" cy="15" r="11.500" />
      {[30, 90, 150, 210, 270, 330].map((a) => (
        <path key={a} d="M10.500 5.500 11.500.8h7l1 4.700z" transform={`rotate(${a} 15 15)`} stroke="#77787a" />
      ))}
    </g>
    <circle cx="15" cy="15" r="6.500" fill="#1464a5" stroke="#d8edf8" strokeWidth="1.7" />
  </Svg>
);

const breadcrumbs = [
  "Users",
  "alex_",
  "AppData",
  "LocalLow",
  "Questline",
  "Fall of Avalon.old",
  "1113942969",
  "Saved",
];

const fileActions = [
  { name: "Cut", icon: <CutIcon /> },
  { name: "Copy", icon: <CopyIcon /> },
  { name: "Paste", icon: <PasteIcon />, disabled: true },
  { name: "Rename", icon: <RenameIcon /> },
  { name: "Share", icon: <ShareIcon /> },
  { name: "Delete", icon: <TrashIcon /> },
];

const sideGroups = [
  [
    { name: "Home", icon: <HomeIcon /> },
    { name: "Gallery", icon: <PictureIcon stacked /> },
  ],
  [
    { name: "Downloads", icon: <DownloadIcon />, pinned: true },
    { name: "Documents", icon: <DocumentIcon />, pinned: true },
    { name: "Pictures", icon: <PictureIcon />, pinned: true },
    { name: "Music", icon: <MusicIcon />, pinned: true },
    { name: "Videos", icon: <VideoIcon />, pinned: true },
  ],
  [
    { name: "This PC", icon: <PcIcon />, chevron: "down" },
    { name: "OS (C:)", icon: <DriveIcon />, chevron: "right", nested: true, selected: true },
    { name: "Network", icon: <NetworkIcon />, chevron: "right" },
  ],
];

const files = [
  { name: "AutoSave_1", date: "5/24/2025 2:29 PM", type: "File folder", size: "", icon: <FolderIcon /> },
  { name: "PlayerPrefs.data", date: "5/24/2025 2:36 PM", type: "DATA File", size: "5 KB", icon: <FileIcon /> },
];

const menuGroups = [
  [
    { name: "Open with", icon: <OpenWithIcon />, keys: "Enter", arrow: true },
    { name: "Send to My Phone", icon: <PhoneIcon /> },
    { name: "Share", icon: <ShareIcon /> },
    { name: "Add to Favorites", icon: <StarIcon /> },
    { name: "Compress to...", icon: <ZipIcon />, arrow: true },
    { name: "Copy as path", icon: <PathIcon />, keys: "Ctrl+Shift+C", wide: true },
    { name: "Properties", icon: <WrenchIcon />, keys: "Alt+Enter", wide: true },
  ],
  [{ name: "Edit in Notepad", icon: <NotepadIcon /> }],
  [{ name: "Show more options", icon: <MoreIcon /> }],
];

const apps = [
  { name: "Task view", icon: <TaskViewIcon /> },
  { name: "Calculator", icon: <CalcIcon /> },
  { name: "On-screen keyboard", icon: <KeyboardIcon /> },
  { name: "Photos", icon: <PhotosIcon />, open: true },
  { name: "Firefox", icon: <FirefoxIcon /> },
  { name: "Chrome", icon: <ChromeIcon />, open: true },
  { name: "Edge", icon: <EdgeIcon /> },
  { name: "File Explorer", icon: <ExplorerIcon />, active: true },
  { name: "OBS", icon: <ObsIcon />, open: true, dot: true },
  { name: "Netflix", icon: <NetflixIcon /> },
  { name: "Xbox", icon: <XboxIcon />, badge: "1" },
  { name: "Store", icon: <StoreIcon /> },
  { name: "Notepad", icon: <NotepadIcon size={30} />, open: true },
  { name: "Steam", icon: <SteamIcon />, open: true },
  { name: "Word", icon: <WordIcon />, open: true },
  { name: "Settings", icon: <SettingsIcon />, open: true },
];

const ContextMenu = () => (
  <Menu>
    <MenuTop>
      {fileActions
        .filter((a) => !a.disabled)
        .map((a) => (
          <TopAction key={a.name}>
            {a.icon}
            {a.name}
          </TopAction>
        ))}
    </MenuTop>
    {menuGroups.map((group, i) => (
      <MenuGroup key={i}>
        {group.map((item) => (
          <MenuItem key={item.name} $sub={i > 0}>
            {item.icon}
            <MenuLabel>{item.name}</MenuLabel>
            {item.keys && <Shortcut $wide={item.wide}>{item.keys}</Shortcut>}
            {item.arrow && (
              <MenuArrow>
                <Chevron size={12} color="#777" weight={1} />
              </MenuArrow>
            )}
          </MenuItem>
        ))}
      </MenuGroup>
    ))}
  </Menu>
);

const SideBar = () => (
  <Sidebar>
    {sideGroups.map((group, i) => (
      <div key={i}>
        {i > 0 && <SideRule />}
        {group.map((item) => (
          <SideItem key={item.name} href="#" $nested={item.nested} $selected={item.selected}>
            <ChevronSlot>
              {item.chevron && (
                <Chevron
                  dir={item.chevron}
                  size={10}
                  color={item.chevron === "down" ? "#222" : "#888"}
                />
              )}
            </ChevronSlot>
            {item.icon}
            <SideLabel>{item.name}</SideLabel>
            {item.pinned && <PinIcon />}
          </SideItem>
        ))}
      </div>
    ))}
  </Sidebar>
);

const App = () => {
  const [query, setQuery] = useState("");
  const [taskQuery, setTaskQuery] = useState("");

  return (
    <>
      <GlobalStyle />
      <Desktop>
        <BehindScroll />
        <BehindRow />
        <Window>
          <TitleBar>
            <Tab>
              <FolderIcon />
              <TabTitle>Saved</TabTitle>
              <SmallButton aria-label="Close tab">
                <Cross />
              </SmallButton>
            </Tab>
            <NewTab aria-label="New tab">
              <Svg size={14} box="0 0 14 14" stroke="#5d5447" strokeWidth="1.3">
                <path d="M7 .5v13M.5 7h13" />
              </Svg>
            </NewTab>
            <WindowControls>
              <ControlButton aria-label="Minimize">
                <Svg size={12} box="0 0 12 12" stroke="#111" strokeWidth="1.2">
                  <path d="M0 6h12" />
                </Svg>
              </ControlButton>
              <ControlButton aria-label="Maximize">
                <Svg size={12} box="0 0 12 12" stroke="#111" strokeWidth="1.3">
                  <rect x=".5" y=".5" width="11" height="11" rx=".5" />
                </Svg>
              </ControlButton>
              <ControlButton aria-label="Close">
                <Cross />
              </ControlButton>
            </WindowControls>
          </TitleBar>

          <NavBar>
            <NavButton aria-label="Back">
              <Svg size={16} stroke="currentColor" strokeWidth="1.5">
                <path d="M19 10H1M8.500 2 1 10l7.500 8" />
              </Svg>
            </NavButton>
            <NavButton aria-label="Forward" disabled>
              <Svg size={16} stroke="currentColor" strokeWidth="1.5">
                <path d="M1 10h18M11.500 2l7.500 8-7.500 8" />
              </Svg>
            </NavButton>
            <NavButton aria-label="Up">
              <Svg size={16} stroke="currentColor" strokeWidth="1.5">
                <path d="M10 19V1M2 8.500 10 1l8 7.500" />
              </Svg>
            </NavButton>
            <NavButton aria-label="Refresh">
              <Svg size={16} stroke="currentColor" strokeWidth="1.5">
                <path d="M18.500 10A8.500 8.500 0 1 1 15 3.200L18 6M18 1v5h-5" />
              </Svg>
            </NavButton>
            <Address>
              <Svg size={24} box="0 0 24 24" stroke="#4a4a4a" strokeWidth="1.5">
                <rect x="3" y="3" width="18" height="15" rx="3" />
                <path d="M10 18v3M14 18v3M7 21h10" />
              </Svg>
              <Chevron size={9} color="#333" />
              <Svg w={18} h={4} box="0 0 18 4" fill="#333">
                <circle cx="4" cy="2" r="1.400" />
                <circle cx="9" cy="2" r="1.400" />
                <circle cx="14" cy="2" r="1.400" />
              </Svg>
              {breadcrumbs.map((crumb) => [
                <a key={crumb} href="#">
                  {crumb}
                </a>,
                <Chevron key={crumb + "-next"} size={9} color="#333" />,
              ])}
            </Address>
            <SearchBox>
              <SearchInput
                placeholder="Search Saved"
                aria-label="Search Saved"
                value={query}
                onChange={(e) => setQuery(e.target.value)}
              />
              <SearchGlyph />
            </SearchBox>
          </NavBar>

          <Toolbar>
            <ToolButton>
              <Svg strokeWidth="1.2">
                <circle cx="10" cy="10" r="9" stroke={GREY} />
                <path d="M10 5.500v9M5.500 10h9" stroke={BLUE} strokeWidth="1.4" />
              </Svg>
              <ToolLabel>New</ToolLabel>
              <Chevron dir="down" color="#777" weight={1.2} />
            </ToolButton>
            <Separator />
            {fileActions.map((a) => (
              <IconButton key={a.name} aria-label={a.name} disabled={a.disabled}>
                {a.icon}
              </IconButton>
            ))}
            <Separator />
            <ToolButton>
              <Svg strokeWidth="1.5">
                <path d="M6 17V3M1 7.500 6 2.500l4 4" stroke={GREY} />
                <path d="M14 3v14M10 13l4 4.500 5-5" stroke={BLUE} />
              </Svg>
              <ToolLabel>Sort</ToolLabel>
              <Chevron dir="down" color="#777" weight={1.2} />
            </ToolButton>
            <ToolButton>
              <Svg stroke={GREY} strokeWidth="1.2">
                <path d="M.5 4h19M.5 8h19M.5 12h19M.5 16h19" />
              </Svg>
              <ToolLabel>View</ToolLabel>
              <Chevron dir="down" color="#777" weight={1.2} />
            </ToolButton>
            <Separator />
            <IconButton aria-label="See more">
              <Svg fill="#1b1b1b">
                <circle cx="2" cy="10" r="2" />
                <circle cx="10" cy="10" r="2" />
                <circle cx="18" cy="10" r="2" />
              </Svg>
            </IconButton>
            <ToolButton $last>
              <DetailsIcon />
              <ToolLabel>Details</ToolLabel>
            </ToolButton>
          </Toolbar>

          <Body>
            <SideBar />
            <FilePane>
              <FileTable>
                <thead>
                  <tr>
                    <HeadCell $w={322}>
                      <HeadLabel $first>Name</HeadLabel>
                      <SortMark>
                        <Chevron dir="up" size={10} color="#666" weight={1} />
                      </SortMark>
                    </HeadCell>
                    <HeadCell $w={180}>
                      <HeadLabel>Date modified</HeadLabel>
                    </HeadCell>
                    <HeadCell $w={150}>
                      <HeadLabel>Type</HeadLabel>
                    </HeadCell>
                    <HeadCell $w={100}>
                      <HeadLabel>Size</HeadLabel>
                    </HeadCell>
                  </tr>
                </thead>
                <tbody>
                  {files.map((file) => (
                    <Row key={file.name} $selected={file.size !== ""}>
                      <Cell $name>
                        <FileName>
                          {file.icon}
                          {file.name}
                        </FileName>
                      </Cell>
                      <Cell>{file.date}</Cell>
                      <Cell>{file.type}</Cell>
                      <SizeCell>{file.size}</SizeCell>
                    </Row>
                  ))}
                </tbody>
              </FileTable>
            </FilePane>
          </Body>

          <StatusBar>
            <StatusText $gap={26}>2 items</StatusText>
            <StatusText $gap={9}>1 item selected</StatusText>
            <StatusText $gap={0}>4.23 KB</StatusText>
            <ViewButtons>
              <ViewButton $on aria-label="Details view">
                <Svg size={14} box="0 0 14 14" stroke="#3f5a68" strokeWidth="1">
                  <path d="M0 1.500h14M0 5.500h14M0 9.500h14M0 13.500h14" />
                </Svg>
              </ViewButton>
              <ViewButton aria-label="Large icons view">
                <Svg size={14} box="0 0 14 14" stroke="#444" strokeWidth="1">
                  <path d="M.5.5h13v10.500H.5zM.5 13.500h13" />
                </Svg>
              </ViewButton>
            </ViewButtons>
          </StatusBar>

          <ContextMenu />
          <Cursor width="14" height="22" viewBox="0 0 14 22">
            <path
              d="M1 1v16l3.700-3.500 2.500 5.700 2.500-1.100-2.500-5.500H12.500z"
              fill="#fff"
              stroke="#222"
              strokeWidth="1"
            />
          </Cursor>
        </Window>

        <Taskbar>
          <TaskButton aria-label="Start">
            <StartIcon />
          </TaskButton>
          <TaskSearch>
            <SearchGlyph size={18} weight={1.6} color="#2a2522" />
            <SearchInput
              placeholder="Search"
              aria-label="Search"
              value={taskQuery}
              onChange={(e) => setTaskQuery(e.target.value)}
            />
          </TaskSearch>
          {apps.map((app) => (
            <TaskButton key={app.name} aria-label={app.name} $open={app.open} $active={app.active}>
              {app.icon}
              {app.dot && <Badge $plain />}
              {app.badge && <Badge>{app.badge}</Badge>}
            </TaskButton>
          ))}
          <Tray>
            <TrayButton aria-label="Hidden icons">
              <Chevron dir="up" size={14} color="#2b2018" weight={1.2} />
            </TrayButton>
            <TrayButton aria-label="Microphone">
              <Svg stroke="#2c5f9e" strokeWidth="1.5">
                <rect x="6.800" y=".8" width="6.400" height="12" rx="3.200" fill="#dbe3e3" />
                <path d="M3.500 9.500a6.500 6.500 0 0 0 13 0M10 16v3.500" />
              </Svg>
            </TrayButton>
            <TrayButton aria-label="Network, volume, battery">
              <Svg stroke="#2b2018" strokeWidth="1.5">
                <path d="M1 8c5-5.300 13-5.300 18 0M4 11c3.400-3.400 8.600-3.400 12 0M7 13.800c1.800-1.700 4.200-1.700 6 0" />
                <circle cx="10" cy="16" r="1" fill="#2b2018" />
              </Svg>
              <Svg stroke="#2b2018" strokeWidth="1.3">
                <path d="M.7 7.500h3L8 3.800v12.600l-4.300-3.800h-3zM11 7.500c1.300 1.500 1.300 3.700 0 5.200M13.700 5.200c2.600 2.700 2.600 7 0 9.700M16.400 3c4 4.200 4 10 0 14.200" />
              </Svg>
              <Svg stroke="#2b2018" strokeWidth="1.2">
                <path d="M7.500 5H15.500A1.800 1.800 0 0 1 17.300 6.800v7.400a1.800 1.800 0 0 1-1.800 1.800h-12a1.800 1.800 0 0 1-1.800-1.800V11" />
                <path d="M7.500 7.500h7.500v6H4V11.500z" fill="#2b2018" strokeWidth=".6" />
                <path d="M19 9.200v2.800" strokeWidth="2" />
                <path d="M4.800.5.8 6h2L1.800 10 6.300 4.500H4.200z" fill="#2b2018" strokeWidth=".6" />
              </Svg>
            </TrayButton>
            <Clock>
              3:04 PM
              <br />
              5/24/2025
            </Clock>
          </Tray>
        </Taskbar>
      </Desktop>
    </>
  );
};

export default App;
